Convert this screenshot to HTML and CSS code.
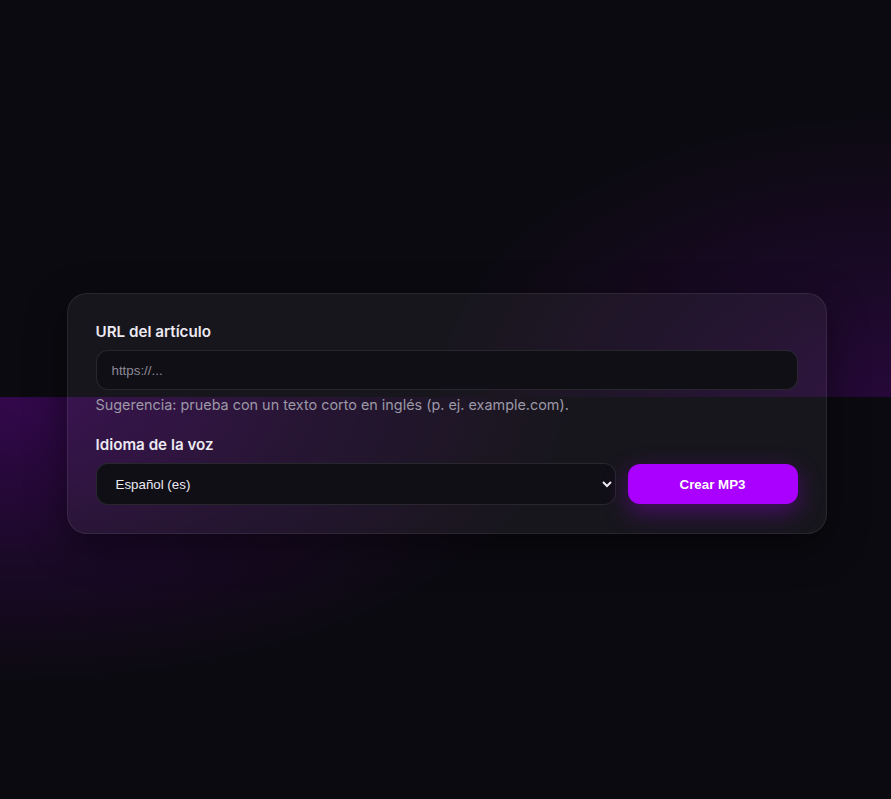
FILE: index.html
```html
<!DOCTYPE html>
<html lang="es">
<head>
<meta charset="utf-8">
<title>Artículo a MP3</title>
<link rel="stylesheet" href="styles.css">
</head>
<body>
<main class="page">
  <form class="card">
    <div class="field">
      <label class="label" for="url">URL del artículo</label>
      <input class="input" id="url" type="url" placeholder="https://...">
      <p class="hint">Sugerencia: prueba con un texto corto en inglés (p. ej. example.com).</p>
    </div>
    <div class="field field-voice">
      <label class="label" for="lang">Idioma de la voz</label>
      <div class="row">
        <select class="select" id="lang">
          <option>Español (es)</option>
          <option>English (en)</option>
        </select>
        <button class="btn" type="button">Crear MP3</button>
      </div>
    </div>
  </form>
</main>
</body>
</html>
```

FILE: styles.css
```css
html {
  background: #0b0a10;
}

body {
  margin: 0;
  min-height: 100vh;
  color-scheme: dark;
  font-family: Inter, "Noto Sans", sans-serif;
  color: #ece9f2;
  background-color: #0b0a10;
  background-image:
    radial-gradient(ellipse 470px 290px at 100% 100%, rgba(170, 0, 255, 0.17) 0%, rgba(170, 0, 255, 0.08) 50%, rgba(170, 0, 255, 0) 100%),
    radial-gradient(ellipse 580px 290px at 0% 0%, rgba(170, 0, 255, 0.25) 0%, rgba(170, 0, 255, 0.1) 55%, rgba(170, 0, 255, 0) 100%);
  background-size: 100% 397px, 100% 402px;
  background-position: top left, bottom left;
  background-repeat: no-repeat;
}

.page {
  min-height: 100vh;
  box-sizing: border-box;
  padding: 28px 0 0 2px;
  display: grid;
  place-items: center;
}

.card {
  box-sizing: border-box;
  width: 760px;
  padding: 28px;
  border: 1px solid rgba(255, 255, 255, 0.08);
  border-radius: 20px;
  background: rgba(255, 255, 255, 0.05);
  box-shadow: 0 12px 40px rgba(0, 0, 0, 0.45);
  margin: 0;
}

.field {
  display: flex;
  flex-direction: column;
}

.field-voice {
  margin-top: 20px;
}

.label {
  font-size: 15.2px;
  font-weight: 600;
  line-height: 20px;
  color: #ece9f2;
  margin-bottom: 8px;
}

.input {
  box-sizing: border-box;
  height: 40px;
  width: 100%;
  padding: 0 15px;
  border: 1px solid rgba(255, 255, 255, 0.1);
  border-radius: 12px;
  background: #100f16;
  color: #ece9f2;
  font-family: "Liberation Sans", Arial, sans-serif;
  font-size: 13.33px;
  outline: none;
}

.input::placeholder {
  color: #8d8a96;
}

.hint {
  margin: 5px 0 0;
  font-size: 14.4px;
  line-height: 20px;
  color: #9c98a6;
}

.row {
  display: grid;
  grid-template-columns: 1fr 170px;
  gap: 12px;
  align-items: center;
}

.select {
  box-sizing: border-box;
  height: 42px;
  width: 100%;
  padding: 0 12px 0 15px;
  border: 1px solid rgba(255, 255, 255, 0.1);
  border-radius: 12px;
  background-color: #100f16;
  color: #ece9f2;
  font-family: "Liberation Sans", Arial, sans-serif;
  font-size: 13.33px;
}

.btn {
  height: 40px;
  border: 0;
  border-radius: 12px;
  background: #aa00ff;
  color: #ffffff;
  font-family: "Liberation Sans", Arial, sans-serif;
  font-size: 13.33px;
  font-weight: 700;
  box-shadow: 0 8px 24px rgba(170, 0, 255, 0.35);
  cursor: pointer;
}
```
